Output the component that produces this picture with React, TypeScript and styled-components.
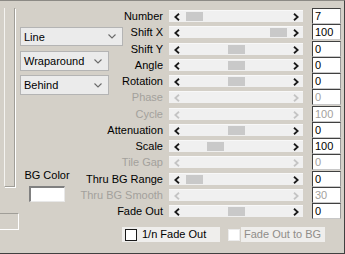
import React from "react";
import styled, { createGlobalStyle } from "styled-components";

const Global = createGlobalStyle`
  html, body { margin: 0; padding: 0; background: #d4d0c8; }
  body { font-family: "Liberation Sans", Arial, sans-serif; font-size: 11px; }
`;

const Window = styled.div`
  width: 345px;
  height: 254px;
  box-sizing: border-box;
  background: #d4d0c8;
  border-top: 1px solid #8c8a85;
  border-right: 1px solid #404040;
  border-bottom: 1px solid #404040;
  display: flex;
  overflow: hidden;
  color: #000;
`;

const LeftPane = styled.div`
  flex: none;
  width: 120px;
  display: flex;
  flex-direction: column;
`;

const TopArea = styled.div`
  display: flex;
`;

const EdgeFrame = styled.div`
  flex: none;
  margin-left: 4px;
  margin-top: 7px;
  width: 9px;
  height: 178px;
  border-left: 1px solid #f4f3f0;
  border-right: 1px solid #a09e98;
  border-bottom: 1px solid #a09e98;
  box-shadow: 1px 1px 0 #ffffff;
`;

const Controls = styled.div`
  display: flex;
  flex-direction: column;
  align-items: flex-start;
  padding-top: 26px;
  padding-left: 5px;
`;

const Select = styled.div<{ $w: number; $h: number; $mt: number }>`
  flex: none;
  box-sizing: border-box;
  width: ${(p) => p.$w}px;
  height: ${(p) => p.$h}px;
  margin-top: ${(p) => p.$mt}px;
  background: #ebebeb;
  border: 1px solid #b4b4b4;
  display: flex;
  align-items: center;
  justify-content: space-between;
  padding: 0 6px 0 3px;
  font-size: 11px;
  white-space: nowrap;
`;

const Chevron = () => (
  <svg width="8" height="5" viewBox="0 0 8 5">
    <polyline points="0.5,0.5 4,4 7.5,0.5" fill="none" stroke="#6a6a6a" strokeWidth="1.1" />
  </svg>
);

const ColorGroup = styled.div`
  margin-top: 74px;
  width: 54px;
  display: flex;
  flex-direction: column;
  align-items: center;
`;

const ColorLabel = styled.div`
  line-height: 13px;
  white-space: nowrap;
`;

const ColorWell = styled.div`
  margin-top: 4px;
  box-sizing: border-box;
  width: 36px;
  height: 16px;
  background: #fff;
  border-top: 2px solid #808080;
  border-left: 2px solid #808080;
  border-right: 1px solid #e8e8e8;
  border-bottom: 1px solid #e8e8e8;
`;

const BottomFrame = styled.div`
  margin-top: 11px;
  width: 18px;
  height: 15px;
  border-top: 1px solid #a09e98;
  border-right: 1px solid #ffffff;
  border-bottom: 1px solid #ffffff;
`;

const RightPane = styled.div`
  flex: 1;
  display: flex;
  flex-direction: column;
  padding-top: 7px;
`;

const ROW_HEIGHTS = [16, 17, 16, 16, 16, 17, 16, 16, 16, 17, 16, 16, 16];

const Grid = styled.div`
  display: grid;
  grid-template-columns: 49px 143px 29px;
  grid-template-rows: ${ROW_HEIGHTS.map((h) => h + "px").join(" ")};
`;

const Label = styled.div<{ $disabled?: boolean }>`
  display: flex;
  justify-content: flex-end;
  align-items: center;
  padding-right: 6px;
  height: 16px;
  white-space: nowrap;
  color: ${(p) => (p.$disabled ? "#a3a19c" : "#000")};
`;

const TrackCell = styled.div`
  display: flex;
  align-items: flex-start;
`;

const Track = styled.div`
  position: relative;
  box-sizing: border-box;
  margin-top: 2px;
  width: 134px;
  height: 12px;
  background: #f0f0f0;
  border-top: 1px solid #f8f8f8;
  display: flex;
  align-items: center;
  justify-content: space-between;
  padding: 0 4px 0 5px;
`;

const Thumb = styled.div<{ $pos: number }>`
  position: absolute;
  top: 1px;
  left: ${(p) => p.$pos}px;
  width: 17px;
  height: 9px;
  background: #c9c9c9;
`;

const ArrowSvg = styled.svg`
  position: relative;
  z-index: 1;
`;

const Arrow = ({ dir, disabled }: { dir: "l" | "r"; disabled?: boolean }) => (
  <ArrowSvg width="6" height="8" viewBox="0 0 6 8">
    <polyline
      points={dir === "l" ? "5,0.8 1.3,4 5,7.2" : "1,0.8 4.7,4 1,7.2"}
      fill="none"
      stroke={disabled ? "#c4c4c4" : "#1a1a1a"}
      strokeWidth="1.8"
    />
  </ArrowSvg>
);

const ValueBox = styled.div<{ $disabled?: boolean }>`
  box-sizing: border-box;
  width: 29px;
  height: 16px;
  background: #fff;
  border-top: 1px solid #404040;
  border-left: 1px solid #404040;
  border-right: 1px solid #9a9a9a;
  border-bottom: 1px solid #c8c8c8;
  padding-left: 2px;
  line-height: 14px;
  color: ${(p) => (p.$disabled ? "#a3a19c" : "#000")};
`;

const CheckRow = styled.div`
  display: flex;
  margin-top: 8px;
  margin-left: 2px;
  gap: 8px;
`;

const CheckControl = styled.div<{ $w: number; $filled?: boolean }>`
  width: ${(p) => p.$w}px;
  height: 15px;
  display: flex;
  align-items: center;
  box-sizing: border-box;
  padding-left: ${(p) => (p.$filled ? 3 : 0)}px;
  background: ${(p) => (p.$filled ? "#efeeec" : "transparent")};
`;

const Box = styled.div<{ $disabled?: boolean }>`
  flex: none;
  box-sizing: border-box;
  width: 12px;
  height: 12px;
  background: #fff;
  border: 1px solid ${(p) => (p.$disabled ? "#ececec" : "#1a1a1a")};
`;

const CheckText = styled.div<{ $disabled?: boolean; $boxed?: boolean }>`
  flex: 1;
  height: 15px;
  line-height: 15px;
  background: ${(p) => (p.$boxed ? "#efeeec" : "transparent")};
  padding-left: ${(p) => (p.$boxed ? 3 : 5)}px;
  margin-left: ${(p) => (p.$boxed ? 1 : 0)}px;
  white-space: nowrap;
  color: ${(p) => (p.$disabled ? "#8f8d89" : "#000")};
`;

type Row = { label: string; value: string; thumb?: number; disabled?: boolean };

const rows: Row[] = [
  { label: "Number", value: "7", thumb: 17 },
  { label: "Shift X", value: "100", thumb: 101 },
  { label: "Shift Y", value: "0", thumb: 59 },
  { label: "Angle", value: "0", thumb: 59 },
  { label: "Rotation", value: "0", thumb: 59 },
  { label: "Phase", value: "0", disabled: true },
  { label: "Cycle", value: "100", disabled: true },
  { label: "Attenuation", value: "0", thumb: 59 },
  { label: "Scale", value: "100", thumb: 38 },
  { label: "Tile Gap", value: "0", disabled: true },
  { label: "Thru BG Range", value: "0", thumb: 17 },
  { label: "Thru BG Smooth", value: "30", disabled: true },
  { label: "Fade Out", value: "0", thumb: 59 },
];

export default function App() {
  return (
    <>
      <Global />
      <Window>
        <LeftPane>
          <TopArea>
            <EdgeFrame />
            <Controls>
              <Select $w={103} $h={19} $mt={0}>
                <span>Line</span>
                <Chevron />
              </Select>
              <Select $w={89} $h={20} $mt={5}>
                <span>Wraparound</span>
                <Chevron />
              </Select>
              <Select $w={89} $h={20} $mt={4}>
                <span>Behind</span>
                <Chevron />
              </Select>
              <ColorGroup>
                <ColorLabel>BG Color</ColorLabel>
                <ColorWell />
              </ColorGroup>
            </Controls>
          </TopArea>
          <BottomFrame />
        </LeftPane>
        <RightPane>
          <Grid>
            {rows.map((r) => (
              <React.Fragment key={r.label}>
                <Label $disabled={r.disabled}>{r.label}</Label>
                <TrackCell>
                  <Track>
                    {r.thumb !== undefined && <Thumb $pos={r.thumb} />}
                    <Arrow dir="l" disabled={r.disabled} />
                    <Arrow dir="r" disabled={r.disabled} />
                  </Track>
                </TrackCell>
                <ValueBox $disabled={r.disabled}>{r.value}</ValueBox>
              </React.Fragment>
            ))}
          </Grid>
          <CheckRow>
            <CheckControl $w={98} $filled>
              <Box />
              <CheckText>1/n Fade Out</CheckText>
            </CheckControl>
            <CheckControl $w={97}>
              <Box $disabled />
              <CheckText $disabled $boxed>
                Fade Out to BG
              </CheckText>
            </CheckControl>
          </CheckRow>
        </RightPane>
      </Window>
    </>
  );
}
